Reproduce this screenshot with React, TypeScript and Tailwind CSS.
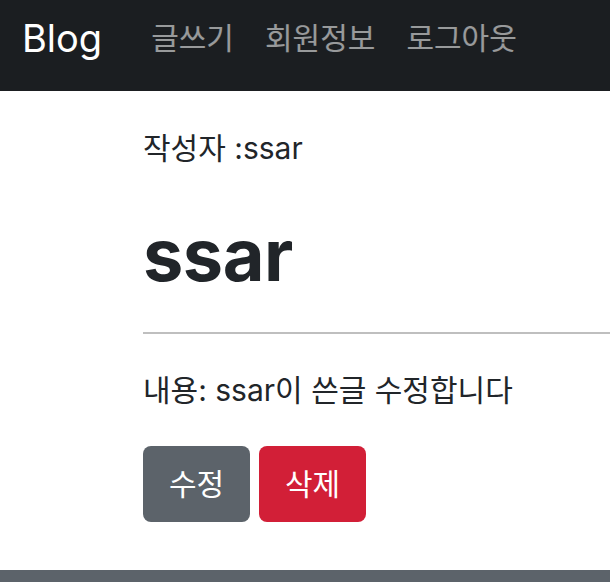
export default function App() {
  const font = { fontFamily: "Inter, 'Noto Sans CJK KR', sans-serif" };
  return (
    <div className="min-h-[582px] bg-white text-[#212529] flex flex-col" style={font}>
      <nav className="h-[91px] bg-[#1b1e21] flex items-start pt-[10px] pl-[22px]">
        <a className="text-[38px] leading-[57px] text-white mr-[49px]">Blog</a>
        <ul className="flex gap-[31px] text-[30px] leading-[57px] text-white/55">
          <li>글쓰기</li>
          <li>회원정보</li>
          <li>로그아웃</li>
        </ul>
      </nav>

      <main className="flex-1 pl-[143px] pt-[36px]">
        <div className="text-[30px] leading-[43px]">작성자 :ssar</div>
        <h1 className="text-[72px] font-bold leading-[86px] mt-[42px] tracking-[-0.5px]">ssar</h1>
        <hr className="mt-[34px] border-t-2 border-[#bfbfbf]" />
        <p className="mt-[35px] text-[30px] leading-[43px]">내용: ssar이 쓴글 수정합니다</p>
        <div className="mt-[34px] flex gap-[9px]">
          <button className="w-[107px] h-[76px] rounded-[8px] bg-[#5c636a] text-white text-[30px]">수정</button>
          <button className="w-[107px] h-[76px] rounded-[8px] bg-[#d21f37] text-white text-[30px]">삭제</button>
        </div>
      </main>

      <footer className="h-[12px] bg-[#5c636a]" />
    </div>
  );
}
